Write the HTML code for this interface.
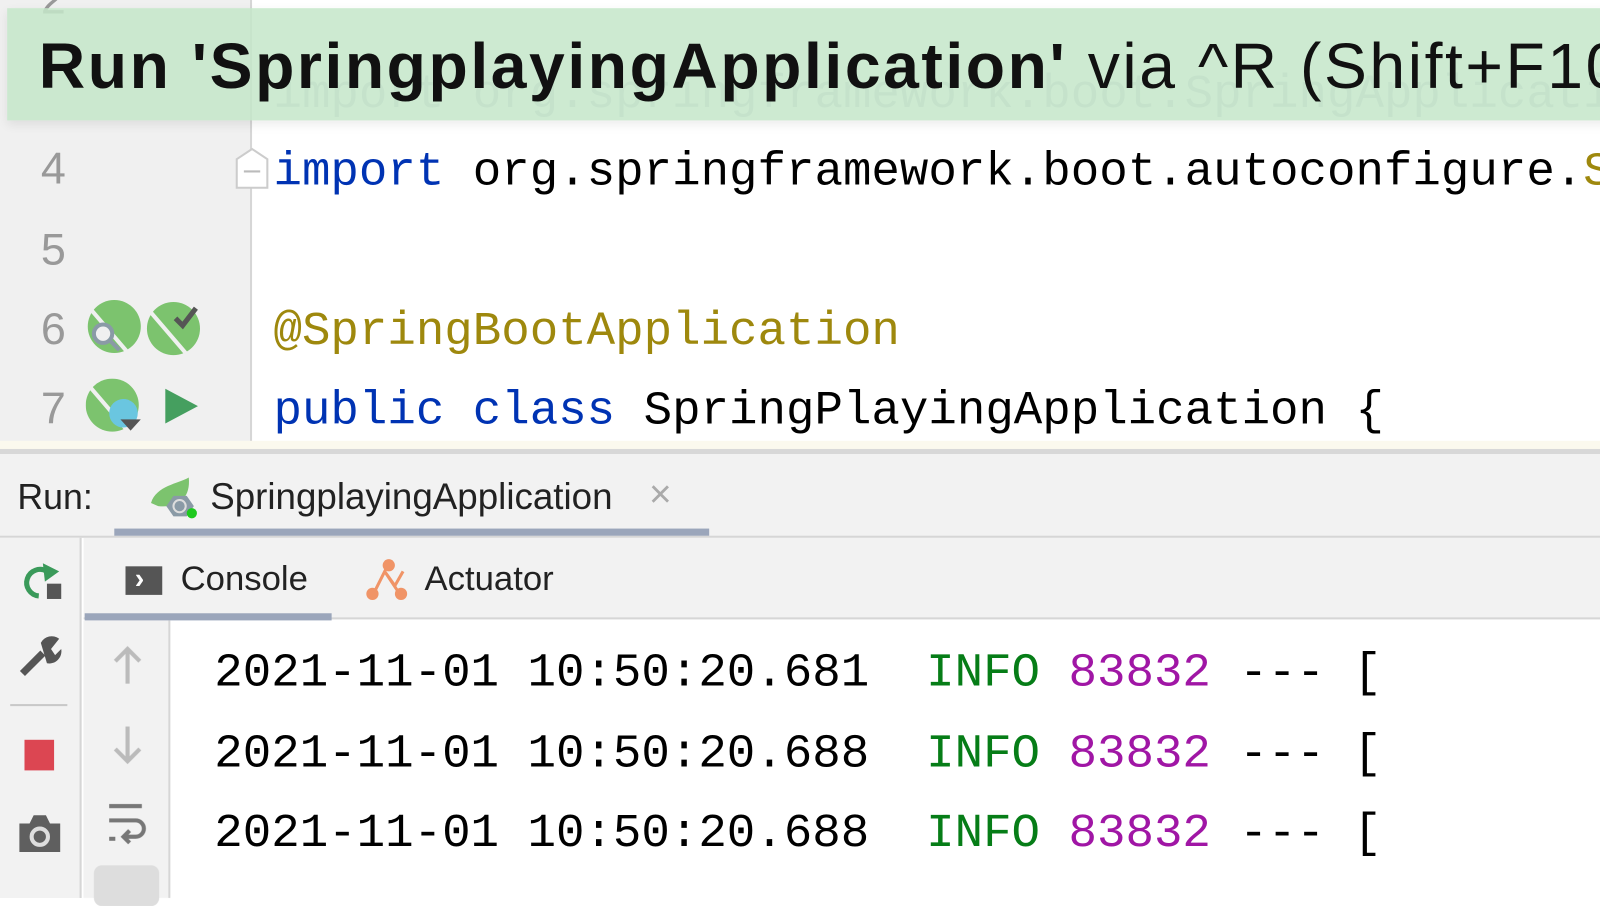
<!DOCTYPE html>
<html><head><meta charset="utf-8"><style>
*{margin:0;padding:0;box-sizing:border-box}
body{width:1600px;height:880px;overflow:hidden;background:#fff;position:relative;font-family:"Liberation Sans",sans-serif}
#w{position:absolute;left:0;top:0;width:1568px;height:863px;transform:scale(1.0204);transform-origin:0 0}
.abs{position:absolute}
.mono{font-family:"Liberation Mono",monospace;font-size:46.5px;white-space:pre;line-height:1}
.ln{font-family:"Liberation Sans",sans-serif;font-size:44px;color:#999;position:absolute;left:40px}
</style></head><body><div id="w">
<div class="abs" style="left:0;top:0;width:247px;height:440px;background:#f0f0f0;border-right:2px solid #d6d6d6"></div>
<div class="abs" style="left:0;top:432px;width:1600px;height:10px;background:#fbf9ee"></div>
<div class="abs" style="left:0;top:440px;width:1600px;height:5px;background:#d8d8d8"></div>
<div class="ln" style="top:-26px">2</div>
<div class="ln" style="top:141px">4</div>
<div class="ln" style="top:220px">5</div>
<div class="ln" style="top:298px">6</div>
<div class="ln" style="top:376px">7</div>
<div class="mono abs" style="left:268px;top:70px;color:#c5cbd8">import org.springframework.boot.SpringApplicati</div>
<div class="mono abs" style="left:268px;top:146px;color:#000"><span style="color:#0033b3">import</span> org.springframework.boot.autoconfigure.<span style="color:#9e880d">S</span></div>
<div class="mono abs" style="left:268px;top:302px;color:#9e880d">@SpringBootApplication</div>
<div class="mono abs" style="left:268px;top:380px;color:#000"><span style="color:#0033b3">public class</span> SpringPlayingApplication {</div>
<svg class="abs" style="left:230px;top:144px" width="36" height="42"><path d="M2 12 L17 2 L32 12 V40 H2 Z" fill="#fff" stroke="#ccc" stroke-width="2"/><path d="M9 24 H25" stroke="#bbb" stroke-width="2"/></svg>
<svg class="abs" style="left:84px;top:294px" width="114" height="56">
<circle cx="28" cy="26" r="26" fill="#7cc36e"/><path d="M4 8 L40 50" stroke="#f0f0f0" stroke-width="4"/>
<circle cx="17" cy="33" r="9" fill="#f0f0f0" stroke="#8a9aa6" stroke-width="4"/><path d="M24 40 L33 49" stroke="#8a9aa6" stroke-width="4"/>
<circle cx="86" cy="28" r="26" fill="#7cc36e"/><path d="M62 10 L98 52" stroke="#f0f0f0" stroke-width="4"/>
<path d="M88 18 L95 25 L108 8" fill="none" stroke="#555" stroke-width="5"/>
</svg>
<svg class="abs" style="left:84px;top:371px" width="114" height="56">
<circle cx="26" cy="26" r="26" fill="#7cc36e"/><path d="M4 8 L40 50" stroke="#f0f0f0" stroke-width="4"/>
<circle cx="37" cy="34" r="14" fill="#6ac6e0"/><path d="M34 40 L54 40 L44 51Z" fill="#555"/>
<path d="M78 10 L110 27 L78 44Z" fill="#459f5f"/>
</svg>
<div class="abs" style="left:7px;top:8px;width:1600px;height:110px;background:rgba(196,230,201,0.85);box-shadow:0 4px 10px rgba(0,0,0,0.08)"></div>
<div class="abs" style="left:38px;top:28px;font-size:63px;color:#111;white-space:nowrap;line-height:1.2;letter-spacing:2.5px"><b>Run 'SpringplayingApplication'</b> via ^R (Shift+F10)</div>
<div class="abs" style="left:0;top:445px;width:1600px;height:82px;background:#f2f2f2;border-bottom:2px solid #d6d6d6"></div>
<div class="abs" style="left:17px;top:468px;font-size:35px;color:#222">Run:</div>
<svg class="abs" style="left:145px;top:468px" width="55" height="45"><path d="M3 25 C8 8 30 6 40 0 C42 20 30 30 10 28 Z" fill="#7cc36e"/><path d="M25 18 L38 18 L45 28 L38 38 L25 38 L18 28Z" fill="#8a9aa6"/><circle cx="31" cy="28" r="6" fill="none" stroke="#ddd" stroke-width="2"/><circle cx="43" cy="35" r="5" fill="#1ec91e"/></svg>
<div class="abs" style="left:206px;top:466px;font-size:36px;color:#222">SpringplayingApplication</div>
<div class="abs" style="left:636px;top:464px;font-size:38px;color:#aaa">×</div>
<div class="abs" style="left:112px;top:518px;width:583px;height:7px;background:#9ba6bb"></div>
<div class="abs" style="left:0;top:527px;width:80px;height:353px;background:#f2f2f2;border-right:2px solid #d6d6d6"></div>
<svg class="abs" style="left:18px;top:548px" width="46" height="42"><path d="M20 36 A13 13 0 1 1 28 12" fill="none" stroke="#3a9a5a" stroke-width="5"/><path d="M24 4 L40 12 L26 22Z" fill="#3a9a5a"/><rect x="28" y="24" width="14" height="15" fill="#555"/></svg>
<svg class="abs" style="left:18px;top:622px" width="44" height="42"><path d="M4 38 L24 18" stroke="#555" stroke-width="7"/><path d="M22 8 A12 12 0 0 1 40 4 L32 14 L36 20 L42 14 A12 12 0 0 1 28 28Z" fill="#555"/></svg>
<div class="abs" style="left:10px;top:690px;width:56px;height:2px;background:#c8c8c8"></div>
<div class="abs" style="left:24px;top:725px;width:29px;height:30px;background:#dc4652"></div>
<svg class="abs" style="left:17px;top:797px" width="44" height="40"><path d="M2 10 H12 L16 2 H28 L32 10 H42 V38 H2Z" fill="#5f5f5f"/><circle cx="22" cy="23" r="8" fill="none" stroke="#ddd" stroke-width="4"/></svg>
<div class="abs" style="left:82px;top:527px;width:1518px;height:80px;background:#f2f2f2;border-bottom:2px solid #d6d6d6"></div>
<div class="abs" style="left:123px;top:555px;width:36px;height:28px;background:#555"></div>
<div class="abs" style="left:132px;top:551px;font-size:28px;color:#fff;font-weight:bold">›</div>
<div class="abs" style="left:177px;top:548px;font-size:34px;color:#222">Console</div>
<svg class="abs" style="left:357px;top:546px" width="46" height="44"><path d="M8 38 L20 14 L30 28 L38 14 M20 14 L36 38" fill="none" stroke="#f09467" stroke-width="3"/><circle cx="24" cy="8" r="6" fill="#f09467"/><circle cx="8" cy="36" r="6" fill="#f09467"/><circle cx="36" cy="36" r="6" fill="#f09467"/></svg>
<div class="abs" style="left:416px;top:548px;font-size:34px;color:#222">Actuator</div>
<div class="abs" style="left:83px;top:601px;width:242px;height:7px;background:#9ba6bb"></div>
<div class="abs" style="left:82px;top:608px;width:85px;height:272px;background:#f2f2f2;border-right:2px solid #d6d6d6"></div>
<svg class="abs" style="left:105px;top:632px" width="40" height="230" fill="none" stroke="#bbb" stroke-width="4">
<path d="M20 4 V38 M8 16 L20 4 L32 16"/>
<path d="M20 80 V114 M8 102 L20 114 L32 102"/>
<path d="M2 158 H34 M2 172 H28 A8 8 0 0 1 28 188 H16 M22 182 L16 188 L22 194 M2 190 H8" stroke="#777"/>
</svg>
<div class="abs" style="left:92px;top:848px;width:64px;height:40px;background:#ddd;border-radius:8px"></div>
<div class="mono abs" style="left:210px;top:637px;color:#000">2021-11-01 10:50:20.681  <span style="color:#067d17">INFO</span> <span style="color:#a016a5">83832</span> --- [</div>
<div class="mono abs" style="left:210px;top:716px;color:#000">2021-11-01 10:50:20.688  <span style="color:#067d17">INFO</span> <span style="color:#a016a5">83832</span> --- [</div>
<div class="mono abs" style="left:210px;top:794px;color:#000">2021-11-01 10:50:20.688  <span style="color:#067d17">INFO</span> <span style="color:#a016a5">83832</span> --- [</div>
</div></body></html>
